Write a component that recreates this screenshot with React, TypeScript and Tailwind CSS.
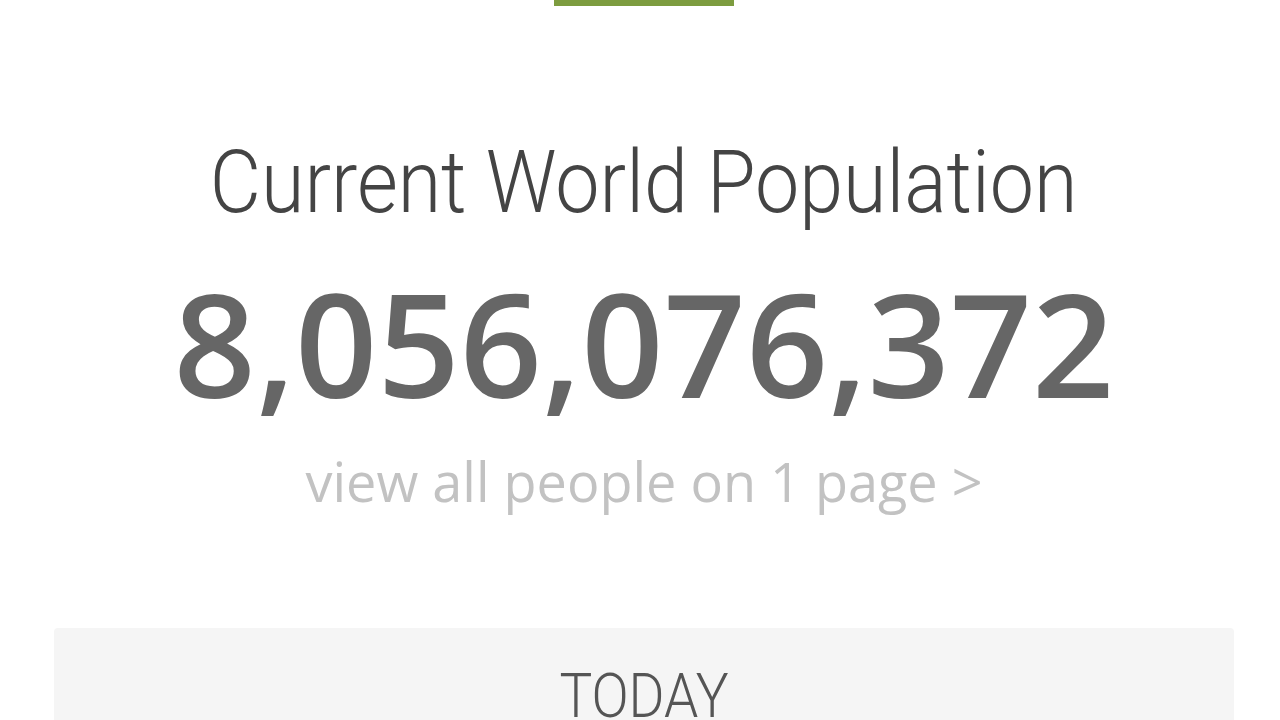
import React from "react";

export default function App() {
  return (
    <div className="w-[1280px] h-[720px] bg-white overflow-hidden pl-[8px] flex flex-col items-center font-['Roboto',sans-serif]">
      <div className="w-[180px] h-[6px] bg-[#7d9c3f] shrink-0" />
      <h1 className="mt-[126px] text-[88px] leading-[100px] font-light text-[#444] whitespace-nowrap scale-x-[0.897] font-['Roboto',sans-serif]">
        Current World Population
      </h1>
      <div className="mt-[35px] text-[144px] leading-[150px] font-semibold text-[#666] whitespace-nowrap font-['Open_Sans',sans-serif]">
        8,056,076,372
      </div>
      <div className="mt-[29px] text-[54px] leading-[70px] text-[#c2c2c2] whitespace-nowrap font-['Open_Sans',sans-serif]">
        view all people on 1 page &gt;
      </div>
      <div className="mt-[112px] w-[1180px] h-[200px] bg-[#f5f5f5] rounded-[4px] flex flex-col items-center shrink-0">
        <div className="mt-[33px] text-[61px] leading-[70px] font-light text-[#555] scale-x-[0.9] font-['Roboto',sans-serif]">
          TODAY
        </div>
      </div>
    </div>
  );
}
